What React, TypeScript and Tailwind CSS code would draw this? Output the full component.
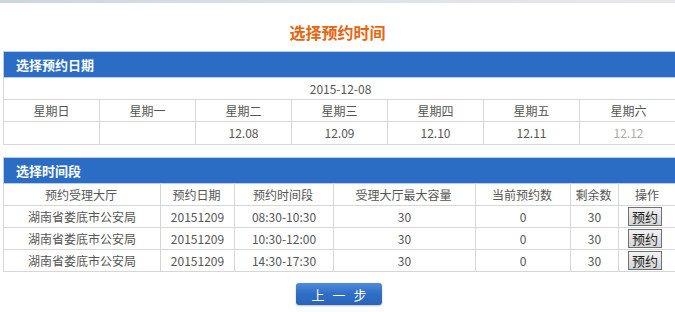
import React from "react";

const font = { fontFamily: '"Noto Sans CJK SC", "Noto Sans", sans-serif' };

const weekdays = ["星期日", "星期一", "星期二", "星期三", "星期四", "星期五", "星期六"];
const dates = ["", "", "12.08", "12.09", "12.10", "12.11", "12.12"];
const slots = ["08:30-10:30", "10:30-12:00", "14:30-17:30"];

function SectionHeader({ title }: { title: string }) {
  return (
    <div className="h-[26px] bg-[#2b6cc4] border-t border-l border-[#b9cde9] flex items-center pl-[12px] text-white text-[13px] font-bold leading-none">
      {title}
    </div>
  );
}

export default function App() {
  return (
    <div className="w-[675px] h-[312px] overflow-hidden bg-white text-[#555] text-[12px]" style={font}>
      <div className="h-[3px] bg-gradient-to-r from-[#cdd5dd] via-[#dde2e7] to-[#e6e9ec]" />
      <div className="h-[48px] flex items-center justify-center pt-[10px] text-[16px] font-bold text-[#e8650f]">
        选择预约时间
      </div>
      <div className="w-[674px] ml-[3px]">
        <SectionHeader title="选择预约日期" />
        <table className="table-fixed border-collapse w-[674px]">
          <colgroup>
            {weekdays.map((_, i) => (
              <col key={i} className={i === 6 ? "w-[98px]" : "w-[96px]"} />
            ))}
          </colgroup>
          <tbody>
            <tr className="h-[22px]">
              <td colSpan={7} className="border border-[#d6d6d6] border-t-[#b9cde9] text-center leading-none">
                2015-12-08
              </td>
            </tr>
            <tr className="h-[22px]">
              {weekdays.map((d) => (
                <td key={d} className="border border-[#d6d6d6] text-center leading-none">
                  {d}
                </td>
              ))}
            </tr>
            <tr className="h-[23px]">
              {dates.map((d, i) => (
                <td
                  key={i}
                  className={
                    "border border-[#d6d6d6] text-center leading-none " +
                    (i === 6 ? "text-[#aaa]" : "text-[#555]")
                  }
                >
                  {d}
                </td>
              ))}
            </tr>
          </tbody>
        </table>

        <div className="h-[12px]" />

        <SectionHeader title="选择时间段" />
        <table className="table-fixed border-collapse w-[674px]">
          <colgroup>
            <col className="w-[157px]" />
            <col className="w-[74px]" />
            <col className="w-[99px]" />
            <col className="w-[142px]" />
            <col className="w-[95px]" />
            <col className="w-[48px]" />
            <col className="w-[59px]" />
          </colgroup>
          <tbody>
            <tr className="h-[22px]">
              {["预约受理大厅", "预约日期", "预约时间段", "受理大厅最大容量", "当前预约数", "剩余数", "操作"].map((h) => (
                <td key={h} className="border border-[#d6d6d6] border-t-[#b9cde9] text-center leading-none pr-[2px]">
                  {h}
                </td>
              ))}
            </tr>
            {slots.map((s) => (
              <tr key={s} className="h-[22px]">
                <td className="border border-[#d6d6d6] text-center leading-none">湖南省娄底市公安局</td>
                <td className="border border-[#d6d6d6] text-center leading-none">20151209</td>
                <td className="border border-[#d6d6d6] text-center leading-none">{s}</td>
                <td className="border border-[#d6d6d6] text-center leading-none">30</td>
                <td className="border border-[#d6d6d6] text-center leading-none">0</td>
                <td className="border border-[#d6d6d6] text-center leading-none">30</td>
                <td className="border border-[#d6d6d6] leading-none pl-[9px]">
                  <button className="w-[34px] h-[19px] border border-[#707070] bg-gradient-to-b from-[#f2f2f2] to-[#d4d4d4] text-[13px] text-[#222] leading-none flex items-center justify-center">
                    预约
                  </button>
                </td>
              </tr>
            ))}
          </tbody>
        </table>

        <div className="flex justify-center pt-[11px] pr-[2px]">
          <button className="w-[86px] h-[22px] rounded-[3px] bg-gradient-to-b from-[#4f8ad8] via-[#2f6ec6] to-[#2a64b8] text-white text-[13px] leading-none tracking-[8px] pl-[8px] shadow-[0_1px_2px_rgba(0,0,0,0.25)]">
            上一步
          </button>
        </div>
      </div>
    </div>
  );
}
